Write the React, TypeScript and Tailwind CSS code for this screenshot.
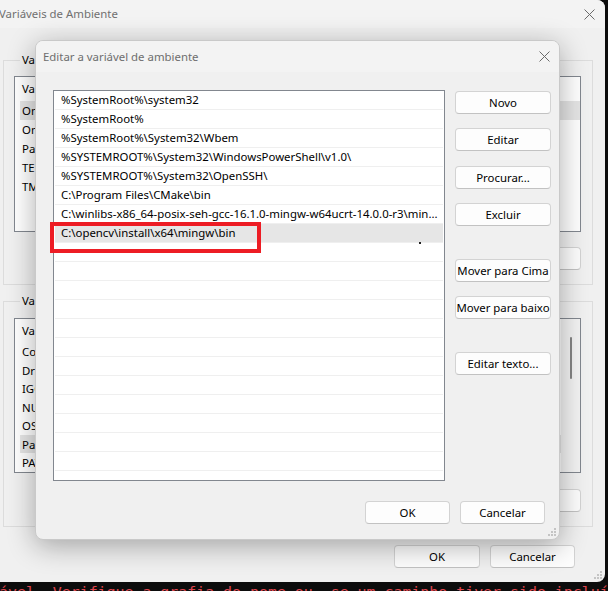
import React from "react"

const paths = [
  "%SystemRoot%\\system32",
  "%SystemRoot%",
  "%SystemRoot%\\System32\\Wbem",
  "%SYSTEMROOT%\\System32\\WindowsPowerShell\\v1.0\\",
  "%SYSTEMROOT%\\System32\\OpenSSH\\",
  "C:\\Program Files\\CMake\\bin",
  "C:\\winlibs-x86_64-posix-seh-gcc-16.1.0-mingw-w64ucrt-14.0.0-r3\\min...",
  "C:\\opencv\\install\\x64\\mingw\\bin",
]

const userVars = ["OneDrive", "OneDriveConsumer", "Path", "TEMP", "TMP"]
const sysVars = ["ComSpec", "DriverData", "IGCCSVC_DB", "NUMBER_OF_PROCESSORS", "OS", "Path", "PATHEXT"]

function CloseX() {
  return (
    <svg width="11" height="11" viewBox="0 0 11 11">
      <path d="M0.5 0.5L10.5 10.5M10.5 0.5L0.5 10.5" stroke="#6a6a6a" strokeWidth="1" fill="none" />
    </svg>
  )
}

function Grip() {
  return (
    <svg width="8" height="8" viewBox="0 0 8 8">
      <rect x="6" y="0" width="2" height="2" fill="#c4c4c4" />
      <rect x="3" y="3" width="2" height="2" fill="#c4c4c4" />
      <rect x="6" y="3" width="2" height="2" fill="#c4c4c4" />
      <rect x="0" y="6" width="2" height="2" fill="#c4c4c4" />
      <rect x="3" y="6" width="2" height="2" fill="#c4c4c4" />
      <rect x="6" y="6" width="2" height="2" fill="#c4c4c4" />
    </svg>
  )
}

function Btn({ label, w = "w-[96px]" }: { label: string; w?: string }) {
  return (
    <div className={`${w} h-[23px] shrink-0 flex items-center justify-center rounded-[4px] border border-[#d3d3d3] border-b-[#c2c2c2] bg-[#fdfdfd] text-[11.4px] text-black whitespace-nowrap`}>
      {label}
    </div>
  )
}

function VarList({ items, sel, h, scroll }: { items: string[]; sel: number; h: string; scroll?: boolean }) {
  return (
    <div className={`${h} flex border border-[#82878f] bg-white overflow-hidden`}>
      <div className="flex-1 flex flex-col">
        <div className="h-[24px] flex items-center pl-[7px] text-[11.4px]">Variável</div>
        {items.map((t, i) => (
          <div key={i} className={`h-[19px] flex items-center ml-[5px] pl-[2px] text-[11.4px] ${i === sel ? "bg-[#e5e5e5]" : ""}`}>
            {t}
          </div>
        ))}
      </div>
      {scroll && (
        <div className="w-[19px] bg-[#f3f3f3] flex justify-center pt-[18px]">
          <div className="w-[2px] h-[42px] rounded-full bg-[#858585]" />
        </div>
      )}
    </div>
  )
}

export default function App() {
  const rows = Array.from({ length: 21 }, (_, i) => paths[i] ?? "")
  return (
    <div className="relative w-[608px] h-[591px] overflow-hidden bg-[#0c0c0c] font-['Noto_Sans',sans-serif]">
      {/* terminal behind */}
      <div className="pt-[582px] font-['DejaVu_Sans_Mono',monospace] text-[14.9px] leading-[20px] text-[#e0464f] whitespace-nowrap -ml-[1px]">
        ável. Verifique a grafia do nome ou, se um caminho tiver sido incluí
      </div>

      {/* back window */}
      <div className="absolute left-0 top-0 w-[605px] h-[582px] bg-[#f0f0f0] rounded-tr-[8px] rounded-br-[8px] flex flex-col overflow-hidden">
        <div className="h-[28px] shrink-0 bg-[#f3f3f3] flex items-center justify-between">
          <span className="-ml-[1px] text-[11.4px] text-[#707070]">Variáveis de Ambiente</span>
          <div className="mr-[10px]"><CloseX /></div>
        </div>

        <div className="pt-[24px] pl-[3px] pr-[12px] flex flex-col">
          <fieldset className="border border-[#dcdcdc] pl-[10px] pr-[11px] pt-[8px] pb-[14px]">
            <legend className="ml-[6px] px-[2px] text-[11.4px] leading-[16px]">Variáveis de usuário para Usuario</legend>
            <VarList items={userVars} sel={0} h="h-[156px]" />
            <div className="mt-[15px] flex justify-end gap-[8px]">
              <Btn label="Novo..." w="w-[85px]" />
              <Btn label="Editar..." w="w-[85px]" />
              <Btn label="Excluir" w="w-[85px]" />
            </div>
          </fieldset>

          <fieldset className="mt-[8px] border border-[#dcdcdc] pl-[10px] pr-[11px] pt-[9px] pb-[14px]">
            <legend className="ml-[6px] px-[2px] text-[11.4px] leading-[16px]">Variáveis do sistema</legend>
            <VarList items={sysVars} sel={5} h="h-[155px]" scroll />
            <div className="mt-[16px] flex justify-end gap-[8px]">
              <Btn label="Novo..." w="w-[85px]" />
              <Btn label="Editar..." w="w-[85px]" />
              <Btn label="Excluir" w="w-[85px]" />
            </div>
          </fieldset>

          <div className="mt-[18px] pr-[18px] flex justify-end gap-[10px]">
            <Btn label="OK" w="w-[86px]" />
            <Btn label="Cancelar" w="w-[85px]" />
          </div>
        </div>
        <div className="absolute right-[3px] bottom-[3px]"><Grip /></div>
      </div>

      {/* front dialog */}
      <div className="absolute left-[35px] top-[40px] w-[525px] h-[500px] rounded-[8px] border border-[#c9c9c9] bg-[#f0f0f0] shadow-[0_6px_28px_rgba(0,0,0,0.32)] flex flex-col overflow-hidden">
        <div className="h-[31px] shrink-0 bg-[#f3f3f3] flex items-center justify-between">
          <span className="ml-[7px] text-[11.4px] text-[#6e6e6e]">Editar a variável de ambiente</span>
          <div className="mr-[9px]"><CloseX /></div>
        </div>

        <div className="pt-[18px] pl-[17px] flex">
          <div className="w-[392px] h-[391px] border border-[#82878f] bg-white overflow-hidden flex flex-col">
            {rows.map((t, i) => (
              <div
                key={i}
                className={`h-[19px] shrink-0 mx-[1px] border-b border-[#efefef] flex items-center pl-[6px] text-[11.4px] text-black whitespace-nowrap overflow-hidden ${i === 7 ? "bg-[#e6e6e6]" : ""}`}
              >
                {t}
              </div>
            ))}
          </div>
          <div className="ml-[10px] pt-[1px] flex flex-col">
            <Btn label="Novo" />
            <div className="mt-[14px]"><Btn label="Editar" /></div>
            <div className="mt-[15px]"><Btn label="Procurar..." /></div>
            <div className="mt-[14px]"><Btn label="Excluir" /></div>
            <div className="mt-[33px]"><Btn label="Mover para Cima" /></div>
            <div className="mt-[14px]"><Btn label="Mover para baixo" /></div>
            <div className="mt-[33px]"><Btn label="Editar texto..." /></div>
          </div>
        </div>

        <div className="mt-[20px] pr-[14px] flex justify-end gap-[10px]">
          <Btn label="OK" w="w-[85px]" />
          <Btn label="Cancelar" w="w-[85px]" />
        </div>
        <div className="absolute right-[3px] bottom-[3px]"><Grip /></div>
      </div>

      {/* red annotation box */}
      <div className="absolute left-[50px] top-[222px] w-[211px] h-[31px] border-[4px] border-[#ed1c24]" />
      <div className="absolute left-[419px] top-[242px] w-[2px] h-[2px] bg-[#222]" />
    </div>
  )
}
